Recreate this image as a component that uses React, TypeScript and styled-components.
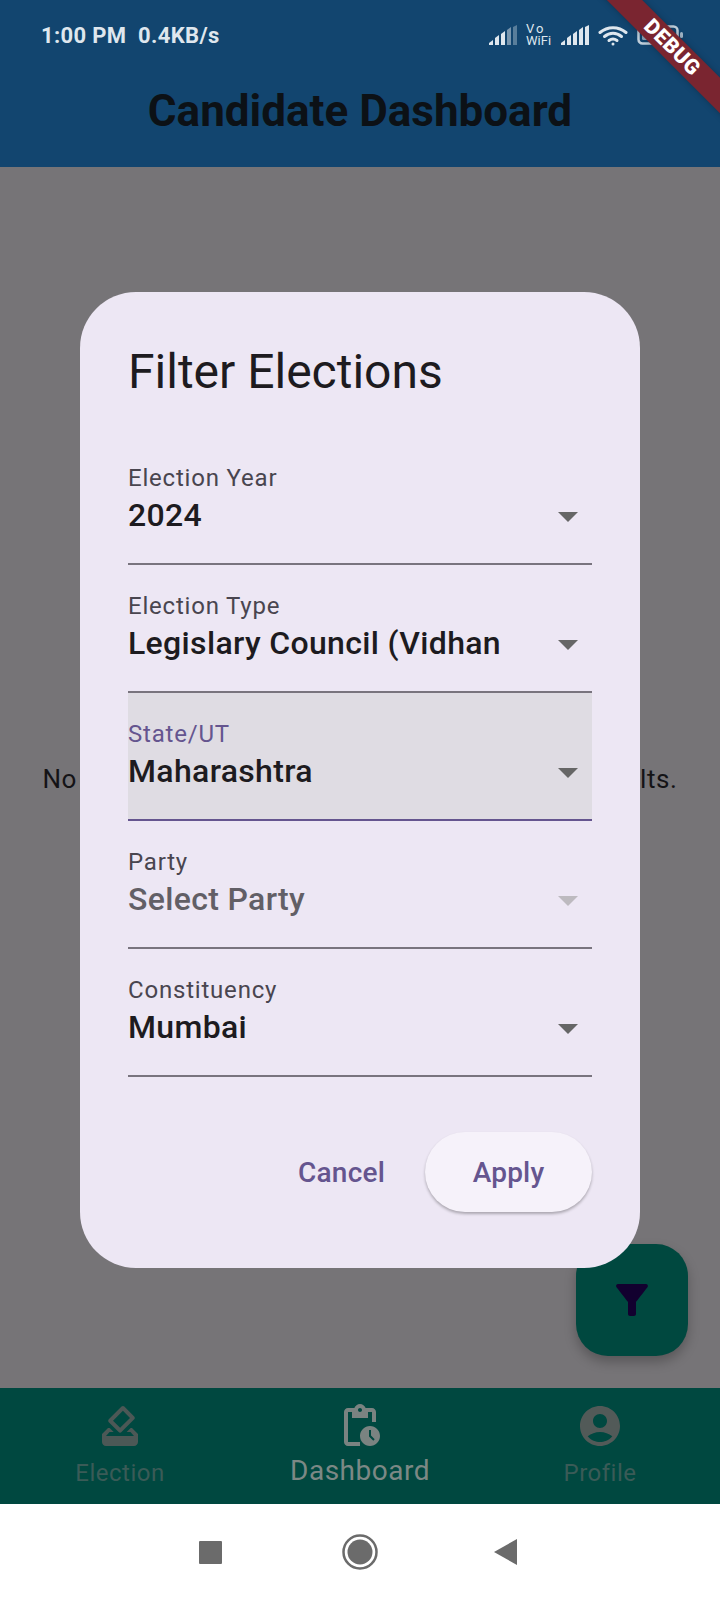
import React from "react";
import styled, { createGlobalStyle } from "styled-components";

const Global = createGlobalStyle`
  html, body { margin: 0; padding: 0; background: #fff; }
  * { box-sizing: border-box; }
  body { font-family: Roboto, "Liberation Sans", sans-serif; }
`;

const Screen = styled.div`
  position: relative;
  width: 720px;
  height: 1600px;
  overflow: hidden;
  display: flex;
  flex-direction: column;
`;

const Header = styled.header`
  height: 167px;
  background: #12456f;
  display: flex;
  flex-direction: column;
`;

const StatusBar = styled.div`
  height: 70px;
  padding: 0 37px 0 41px;
  display: flex;
  align-items: center;
  justify-content: space-between;
  color: #dfe7ee;
`;

const StatusText = styled.span`
  font-size: 22px;
  font-weight: 700;
  letter-spacing: 0.35px;
  white-space: pre;
`;

const StatusIcons = styled.div`
  display: flex;
  align-items: center;
  gap: 9px;
`;

const VoWifi = styled.span`
  font-size: 13px;
  line-height: 12px;
  width: 26px;
  color: #dfe7ee;
`;

const VoLine = styled.span`
  letter-spacing: 2px;
`;

const Title = styled.h1`
  margin: 3px 0 0;
  height: 76px;
  line-height: 76px;
  text-align: center;
  font-size: 44px;
  font-weight: 700;
  color: #0c1116;
`;

const Banner = styled.div`
  position: absolute;
  left: 552px;
  top: 35px;
  width: 240px;
  height: 25px;
  transform: rotate(45deg);
  background: #7a2530;
  box-shadow: 0 0 6px rgba(0, 0, 0, 0.25);
  color: #fff;
  font-size: 21px;
  line-height: 25px;
  font-weight: 900;
  letter-spacing: 0.5px;
  text-align: center;
`;

const Body = styled.main`
  position: relative;
  flex: 1;
  background: #767477;
  display: flex;
  align-items: center;
  justify-content: center;
`;

const EmptyText = styled.p`
  margin: 0;
  padding-top: 2px;
  width: 720px;
  text-align: center;
  font-size: 26px;
  letter-spacing: 0.57px;
  color: #141316;
  white-space: nowrap;
`;

const Fab = styled.button`
  position: absolute;
  right: 32px;
  bottom: 32px;
  width: 112px;
  height: 112px;
  border: 0;
  padding: 0;
  border-radius: 32px;
  background: #00483f;
  box-shadow: 0 6px 12px rgba(0, 0, 0, 0.25);
  display: flex;
  align-items: center;
  justify-content: center;
`;

const Nav = styled.nav`
  height: 116px;
  background: #004840;
  display: grid;
  grid-template-columns: repeat(3, 240px);
`;

const NavItem = styled.div<{ $active?: boolean }>`
  display: flex;
  flex-direction: column;
  align-items: center;
  padding-top: 14px;
  color: ${(p) => (p.$active ? "#7c8885" : "#3a5b57")};
  font-size: ${(p) => (p.$active ? 28 : 24)}px;
  line-height: ${(p) => (p.$active ? 32 : 28)}px;
  letter-spacing: 0.5px;
  gap: ${(p) => (p.$active ? 5 : 9)}px;
`;

const NavIcon = styled.svg<{ $tone: string }>`
  width: 48px;
  height: 48px;
  fill: ${(p) => p.$tone};
  display: block;
`;

const SystemBar = styled.div`
  height: 96px;
  background: #fff;
  display: grid;
  grid-template-columns: 199px 23px 120px 36px 116px auto;
  align-items: center;
`;

const Dialog = styled.section`
  position: absolute;
  left: 80px;
  top: 292px;
  width: 560px;
  height: 976px;
  border-radius: 56px;
  background: #ede7f4;
  padding: 50px 48px 0;
  display: flex;
  flex-direction: column;
`;

const DialogTitle = styled.h2`
  margin: 0 0 35px;
  height: 60px;
  line-height: 60px;
  font-size: 48px;
  font-weight: 400;
  color: #1d1b20;
`;

const Field = styled.div<{ $focused?: boolean }>`
  height: 128px;
  padding-top: 25px;
  display: flex;
  flex-direction: column;
  background: ${(p) => (p.$focused ? "#dfdce3" : "transparent")};
  border-bottom: ${(p) => (p.$focused ? "2px solid #65558f" : "2px solid #79747e")};
`;

const FieldLabel = styled.label<{ $focused?: boolean }>`
  font-size: 24px;
  line-height: 32px;
  letter-spacing: 0.8px;
  color: ${(p) => (p.$focused ? "#65558f" : "#49454f")};
`;

const FieldRow = styled.div`
  margin-top: 1px;
  display: flex;
  align-items: center;
  justify-content: space-between;
  padding-right: 14px;
  height: 44px;
`;

const FieldValue = styled.span<{ $muted?: boolean }>`
  margin-bottom: 4px;
  font-size: 32px;
  font-weight: 500;
  letter-spacing: 0.34px;
  color: ${(p) => (p.$muted ? "#625f66" : "#1d1b20")};
  white-space: nowrap;
`;

const Caret = styled.svg<{ $muted?: boolean }>`
  width: 20px;
  height: 10px;
  fill: ${(p) => (p.$muted ? "#bdbabf" : "#666666")};
`;

const Actions = styled.div`
  margin-top: 55px;
  display: flex;
  justify-content: flex-end;
  align-items: center;
  gap: 40px;
`;

const TextButton = styled.button`
  border: 0;
  background: none;
  padding: 0;
  font: 500 28px Roboto, sans-serif;
  letter-spacing: 0.2px;
  color: #65558f;
`;

const ElevatedButton = styled.button`
  width: 167px;
  height: 80px;
  border: 0;
  border-radius: 40px;
  background: #f6f2fa;
  box-shadow: 0 2px 3px rgba(0, 0, 0, 0.28);
  font: 500 28px Roboto, sans-serif;
  letter-spacing: 0.2px;
  color: #65558f;
`;

const Signal = ({ dim }: { dim?: boolean }) => (
  <svg width="28" height="20" viewBox="0 0 28 20">
    <g fill="#dfe7ee">
      <path d="M0 20v-2l4-3v5z" />
      <path d="M6 20v-7l4-3v10z" />
      <path d="M12 20V9l4-3v14z" />
      <path d="M18 20V5l4-3v18z" opacity={dim ? 0.5 : 1} />
      <path d="M24 20V2l4-2v20z" opacity={dim ? 0.35 : 1} />
    </g>
  </svg>
);

const Wifi = () => (
  <svg width="30" height="21" viewBox="0 0 30 21" fill="none" stroke="#dfe7ee" strokeWidth="3" strokeLinecap="round">
    <path d="M2 7.5c7.5-6.500 18.500-6.500 26 0" />
    <path d="M6.500 11.500c5-4.200 12-4.200 17 0" />
    <path d="M11 15.500c2.500-1.800 5.500-1.800 8 0" />
    <circle cx="15" cy="19" r="1.500" fill="#dfe7ee" stroke="none" />
  </svg>
);

const Battery = () => (
  <svg width="46" height="20" viewBox="0 0 46 20">
    <rect x="1.500" y="1.500" width="39" height="17" rx="4" fill="none" stroke="#dfe7ee" strokeWidth="2.500" opacity="0.85" />
    <rect x="5" y="5" width="14" height="10" rx="1.500" fill="#dfe7ee" opacity="0.6" />
    <rect x="43" y="7" width="3" height="6" rx="1.500" fill="#dfe7ee" opacity="0.7" />
  </svg>
);

const FunnelIcon = () => (
  <svg width="48" height="48" viewBox="0 0 24 24">
    <path fill="#12002f" d="M4.250 5.610C6.270 8.200 10 13 10 13v6c0 .55.45 1 1 1h2c.55 0 1-.45 1-1v-6s3.720-4.800 5.740-7.390c.51-.66.04-1.610-.79-1.610H5.040c-.83 0-1.300.95-.79 1.610z" />
  </svg>
);

const BallotIcon = () => (
  <NavIcon $tone="#4c5856" viewBox="0 0 24 24">
    <path d="M18 13h-.68l-2 2h1.910L19 17H5l1.780-2h2.050l-2-2H6l-3 3v4c0 1.100.89 2 1.990 2H19c1.100 0 2-.89 2-2v-4l-3-3zm-1-5.050l-4.950 4.950-3.540-3.540 4.950-4.950L17 7.950zm-4.240-5.660L6.390 8.660c-.39.39-.39 1.020 0 1.410l4.950 4.950c.39.39 1.020.39 1.410 0l6.360-6.360c.39-.39.39-1.020 0-1.410L14.160 2.300c-.38-.4-1.010-.4-1.400-.01z" />
  </NavIcon>
);

const ClipboardClockIcon = () => (
  <NavIcon $tone="#7a8381" viewBox="0 0 24 24">
    <path d="M17 12c-2.760 0-5 2.240-5 5s2.240 5 5 5 5-2.240 5-5-2.240-5-5-5zm1.650 7.350L16.500 17.200V14h1v2.790l1.850 1.850-.7.71zM18 3h-3.180C14.400 1.840 13.300 1 12 1s-2.400.84-2.820 2H6c-1.100 0-2 .9-2 2v15c0 1.100.9 2 2 2h6v-2H6V5h2v3h8V5h2v5h2V5c0-1.100-.9-2-2-2zm-6 2c-.55 0-1-.45-1-1s.45-1 1-1 1 .45 1 1-.45 1-1 1z" />
  </NavIcon>
);

const ProfileIcon = () => (
  <NavIcon $tone="#525a58" viewBox="0 0 24 24">
    <path d="M12 2C6.480 2 2 6.480 2 12s4.480 10 10 10 10-4.480 10-10S17.520 2 12 2zm0 4c1.930 0 3.500 1.570 3.500 3.500S13.930 13 12 13s-3.500-1.570-3.500-3.500S10.070 6 12 6zm0 14c-2.030 0-4.430-.82-6.140-2.880C7.550 15.800 9.680 15 12 15s4.450.8 6.140 2.120C16.430 19.180 14.030 20 12 20z" />
  </NavIcon>
);

const fields = [
  { label: "Election Year", value: "2024" },
  { label: "Election Type", value: "Legislary Council (Vidhan" },
  { label: "State/UT", value: "Maharashtra", focused: true },
  { label: "Party", value: "Select Party", disabled: true },
  { label: "Constituency", value: "Mumbai" },
];

export default function App() {
  return (
    <Screen>
      <Global />
      <Header>
        <StatusBar>
          <StatusText>{"1:00 PM  0.4KB/s"}</StatusText>
          <StatusIcons>
            <Signal dim />
            <VoWifi><VoLine>Vo</VoLine><br />WiFi</VoWifi>
            <Signal />
            <Wifi />
            <Battery />
          </StatusIcons>
        </StatusBar>
        <Title>Candidate Dashboard</Title>
      </Header>
      <Body>
        <EmptyText>No elections found. Adjust your filters to see results.</EmptyText>
        <Fab aria-label="Filter"><FunnelIcon /></Fab>
      </Body>
      <Nav>
        <NavItem><BallotIcon />Election</NavItem>
        <NavItem $active><ClipboardClockIcon />Dashboard</NavItem>
        <NavItem><ProfileIcon />Profile</NavItem>
      </Nav>
      <SystemBar>
        <span />
        <svg width="23" height="23" viewBox="0 0 23 23"><rect width="23" height="23" rx="1" fill="#6b6b6b" /></svg>
        <span />
        <svg width="36" height="36" viewBox="0 0 36 36"><circle cx="18" cy="18" r="16.500" fill="none" stroke="#6b6b6b" strokeWidth="2.500" /><circle cx="18" cy="18" r="12.500" fill="#6b6b6b" /></svg>
        <span />
        <svg width="24" height="26" viewBox="0 0 24 26"><path d="M23 0v26L0 13z" fill="#6b6b6b" /></svg>
      </SystemBar>
      <Dialog>
        <DialogTitle>Filter Elections</DialogTitle>
        {fields.map((f) => (
          <Field key={f.label} $focused={f.focused}>
            <FieldLabel $focused={f.focused}>{f.label}</FieldLabel>
            <FieldRow>
              <FieldValue $muted={f.disabled}>{f.value}</FieldValue>
              <Caret $muted={f.disabled} viewBox="0 0 20 10"><path d="M0 0h20L10 10z" /></Caret>
            </FieldRow>
          </Field>
        ))}
        <Actions>
          <TextButton>Cancel</TextButton>
          <ElevatedButton>Apply</ElevatedButton>
        </Actions>
      </Dialog>
      <Banner>DEBUG</Banner>
    </Screen>
  );
}
